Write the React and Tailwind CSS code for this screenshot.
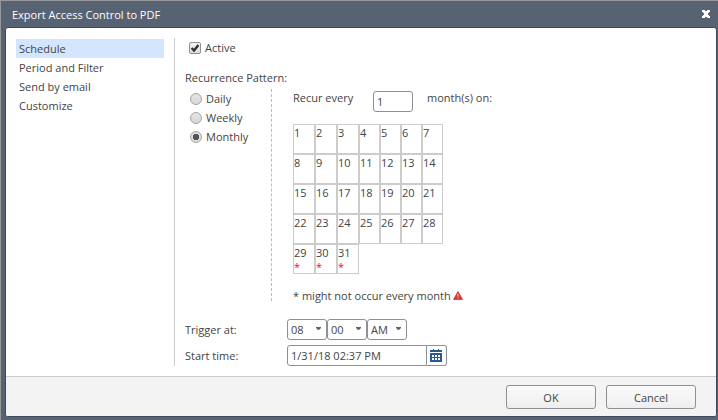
import { useState } from 'react';

const SECTIONS = ['Schedule', 'Period and Filter', 'Send by email', 'Customize'];
const PATTERNS = ['Daily', 'Weekly', 'Monthly'];
const WEEKS = [
  [1, 2, 3, 4, 5, 6, 7],
  [8, 9, 10, 11, 12, 13, 14],
  [15, 16, 17, 18, 19, 20, 21],
  [22, 23, 24, 25, 26, 27, 28],
  [29, 30, 31],
];

function CloseIcon() {
  return (
    <svg width="8" height="8" viewBox="0 0 8 8" fill="#fff" shapeRendering="crispEdges">
      <path d="M0 0h3v1h2V0h3v2H7v1H6v2h1v1h1v2H5V7H3v1H0V6h1V5h1V3H1V2H0z" />
    </svg>
  );
}

function CalendarIcon() {
  return (
    <svg width="12" height="13" viewBox="0 0 12 13" fill="#2a5a94" shapeRendering="crispEdges">
      <path fillRule="evenodd" d="M0 1h3V0h1v1h4V0h1v1h3v2H0z M0 4h12v9H0z M2 6v2h2V6z M5 6v2h2V6z M8 6v2h2V6z M2 9v2h2V9z M5 9v2h2V9z M8 9v2h2V9z" />
    </svg>
  );
}

function WarningIcon() {
  return (
    <svg width="10" height="9" viewBox="0 0 10 9">
      <path d="M5 0.6 9.5 8.4H0.5z" fill="#d63a2e" stroke="#d63a2e" strokeWidth="0.9" strokeLinejoin="round" />
      <path d="M4.5 2.8h1v3h-1z M4.5 6.6h1v1h-1z" fill="#f6cfca" />
    </svg>
  );
}

function TimeSelect({ label, value, options }) {
  return (
    <div className="relative">
      <select
        aria-label={label}
        defaultValue={value}
        className="block h-[21px] w-10 appearance-none rounded-[3px] border border-[#8d9197] bg-white pl-[3px] text-[#444]"
      >
        {options.map((o) => (
          <option key={o}>{o}</option>
        ))}
      </select>
      <svg className="pointer-events-none absolute right-[6px] top-2" width="5" height="3" viewBox="0 0 5 3">
        <path d="M0 0h5v1L3 3H2L0 1z" fill="#666" />
      </svg>
    </div>
  );
}

export default function App() {
  const [section, setSection] = useState('Schedule');
  const [pattern, setPattern] = useState('Monthly');
  const [active, setActive] = useState(true);

  return (
    <div className="flex min-h-screen flex-col border-l border-t border-[#96989a] bg-[#576272] pb-[3px] pl-1 pr-px font-['Open_Sans',sans-serif] text-[11px] leading-[19px] text-[#444]">
      <header className="flex h-[26px] items-center justify-between pl-[7px] pr-[7px]">
        <h1 className="text-white">Export Access Control to PDF</h1>
        <button type="button" aria-label="Close" className="cursor-pointer">
          <CloseIcon />
        </button>
      </header>

      <div className="flex grow flex-col overflow-hidden rounded-[3px] border border-[#3f4854] bg-white">
        <main className="flex grow py-[10px] pl-[10px] pr-3">
          <nav className="w-[159px] shrink-0 border-r border-[#ccc] pr-[10px] pt-px">
            {SECTIONS.map((name) => (
              <button
                key={name}
                type="button"
                onClick={() => setSection(name)}
                className={`block h-[19px] w-full pl-[3px] text-left ${name === section ? 'bg-[#d3e6fd]' : ''}`}
              >
                {name}
              </button>
            ))}
          </nav>

          <div className="grow pl-[10px]">
            <label className="flex items-center gap-1 pl-1">
              <input
                type="checkbox"
                checked={active}
                onChange={(e) => setActive(e.target.checked)}
                className="peer sr-only"
              />
              <span className="flex size-3 items-center justify-center rounded-[2px] border border-[#8f8f8f] bg-linear-to-b from-[#f4f4f4] to-[#dcdcdc]">
                {active && (
                  <svg width="8" height="8" viewBox="0 0 8 8" fill="none" stroke="#333" strokeWidth="2.4">
                    <path d="M0.6 4 3 6.6 7.4 1" />
                  </svg>
                )}
              </span>
              Active
            </label>

            <p className="mt-[11px]">Recurrence Pattern:</p>

            <div className="flex pt-[2px]">
              <div className="mb-1 w-[87px] shrink-0 border-r border-dashed border-[#bbb] pl-[5px]">
                {PATTERNS.map((name) => (
                  <label key={name} className="flex h-[19px] items-center gap-1">
                    <input
                      type="radio"
                      name="pattern"
                      checked={name === pattern}
                      onChange={() => setPattern(name)}
                      className="size-3 appearance-none rounded-full border border-[#a3a3a3] bg-linear-to-b from-[#e4e4e4] to-[#d8d8d8] checked:bg-[radial-gradient(circle,#555_0_3px,#e0e0e0_3px)]"
                    />
                    {name}
                  </label>
                ))}
              </div>

              <div className="pl-[21px]">
                <div className="flex pt-[2px] leading-[14px]">
                  <label htmlFor="every" className="w-20">Recur every</label>
                  <input
                    id="every"
                    defaultValue="1"
                    className="h-[21px] w-10 rounded-[3px] border border-[#8d9197] px-[3px]"
                  />
                  <span className="pl-[14px]">month(s) on:</span>
                </div>

                <table className="mt-3 border-separate border-spacing-0">
                  <tbody>
                    {WEEKS.map((week) => (
                      <tr key={week[0]}>
                        {week.map((day, i) => (
                          <td key={day} className="h-[30px] border border-[#ccc] p-0 align-top leading-[14px]">
                            <div className={`pt-px ${i < 3 ? 'w-5' : 'w-[19px]'}`}>{day}</div>
                            {day > 28 && <div className="leading-[13px] text-[#ff0040]">*</div>}
                          </td>
                        ))}
                      </tr>
                    ))}
                  </tbody>
                </table>

                <p className="mt-3 flex items-center gap-[2px]">
                  * might not occur every month <WarningIcon />
                </p>
              </div>
            </div>

            <div className="mt-[14px] flex items-center">
              <span className="w-[102px]">Trigger at:</span>
              <TimeSelect label="Hour" value="08" options={['07', '08', '09', '10']} />
              <TimeSelect label="Minute" value="00" options={['00', '15', '30', '45']} />
              <TimeSelect label="AM or PM" value="AM" options={['AM', 'PM']} />
            </div>

            <div className="mt-[5px] flex items-center">
              <label htmlFor="start" className="w-[102px]">Start time:</label>
              <input
                id="start"
                defaultValue="1/31/18 02:37 PM"
                className="h-[21px] w-[140px] rounded-l-[3px] border border-[#8d9197] px-[3px]"
              />
              <button
                type="button"
                aria-label="Pick a date"
                className="flex h-[21px] w-5 items-center justify-center rounded-r-[3px] border border-l-0 border-[#8d9197] pr-px"
              >
                <CalendarIcon />
              </button>
            </div>
          </div>
        </main>

        <footer className="flex h-10 items-center justify-end gap-[10px] border-t border-[#ccc] bg-[#f3f3f3] pr-5 pt-px">
          {['OK', 'Cancel'].map((name) => (
            <button
              key={name}
              type="button"
              className="h-6 w-[90px] rounded-[3px] border border-[#8d9197] bg-linear-to-b from-[#fbfbfb] to-[#eee]"
            >
              {name}
            </button>
          ))}
        </footer>
      </div>
    </div>
  );
}
